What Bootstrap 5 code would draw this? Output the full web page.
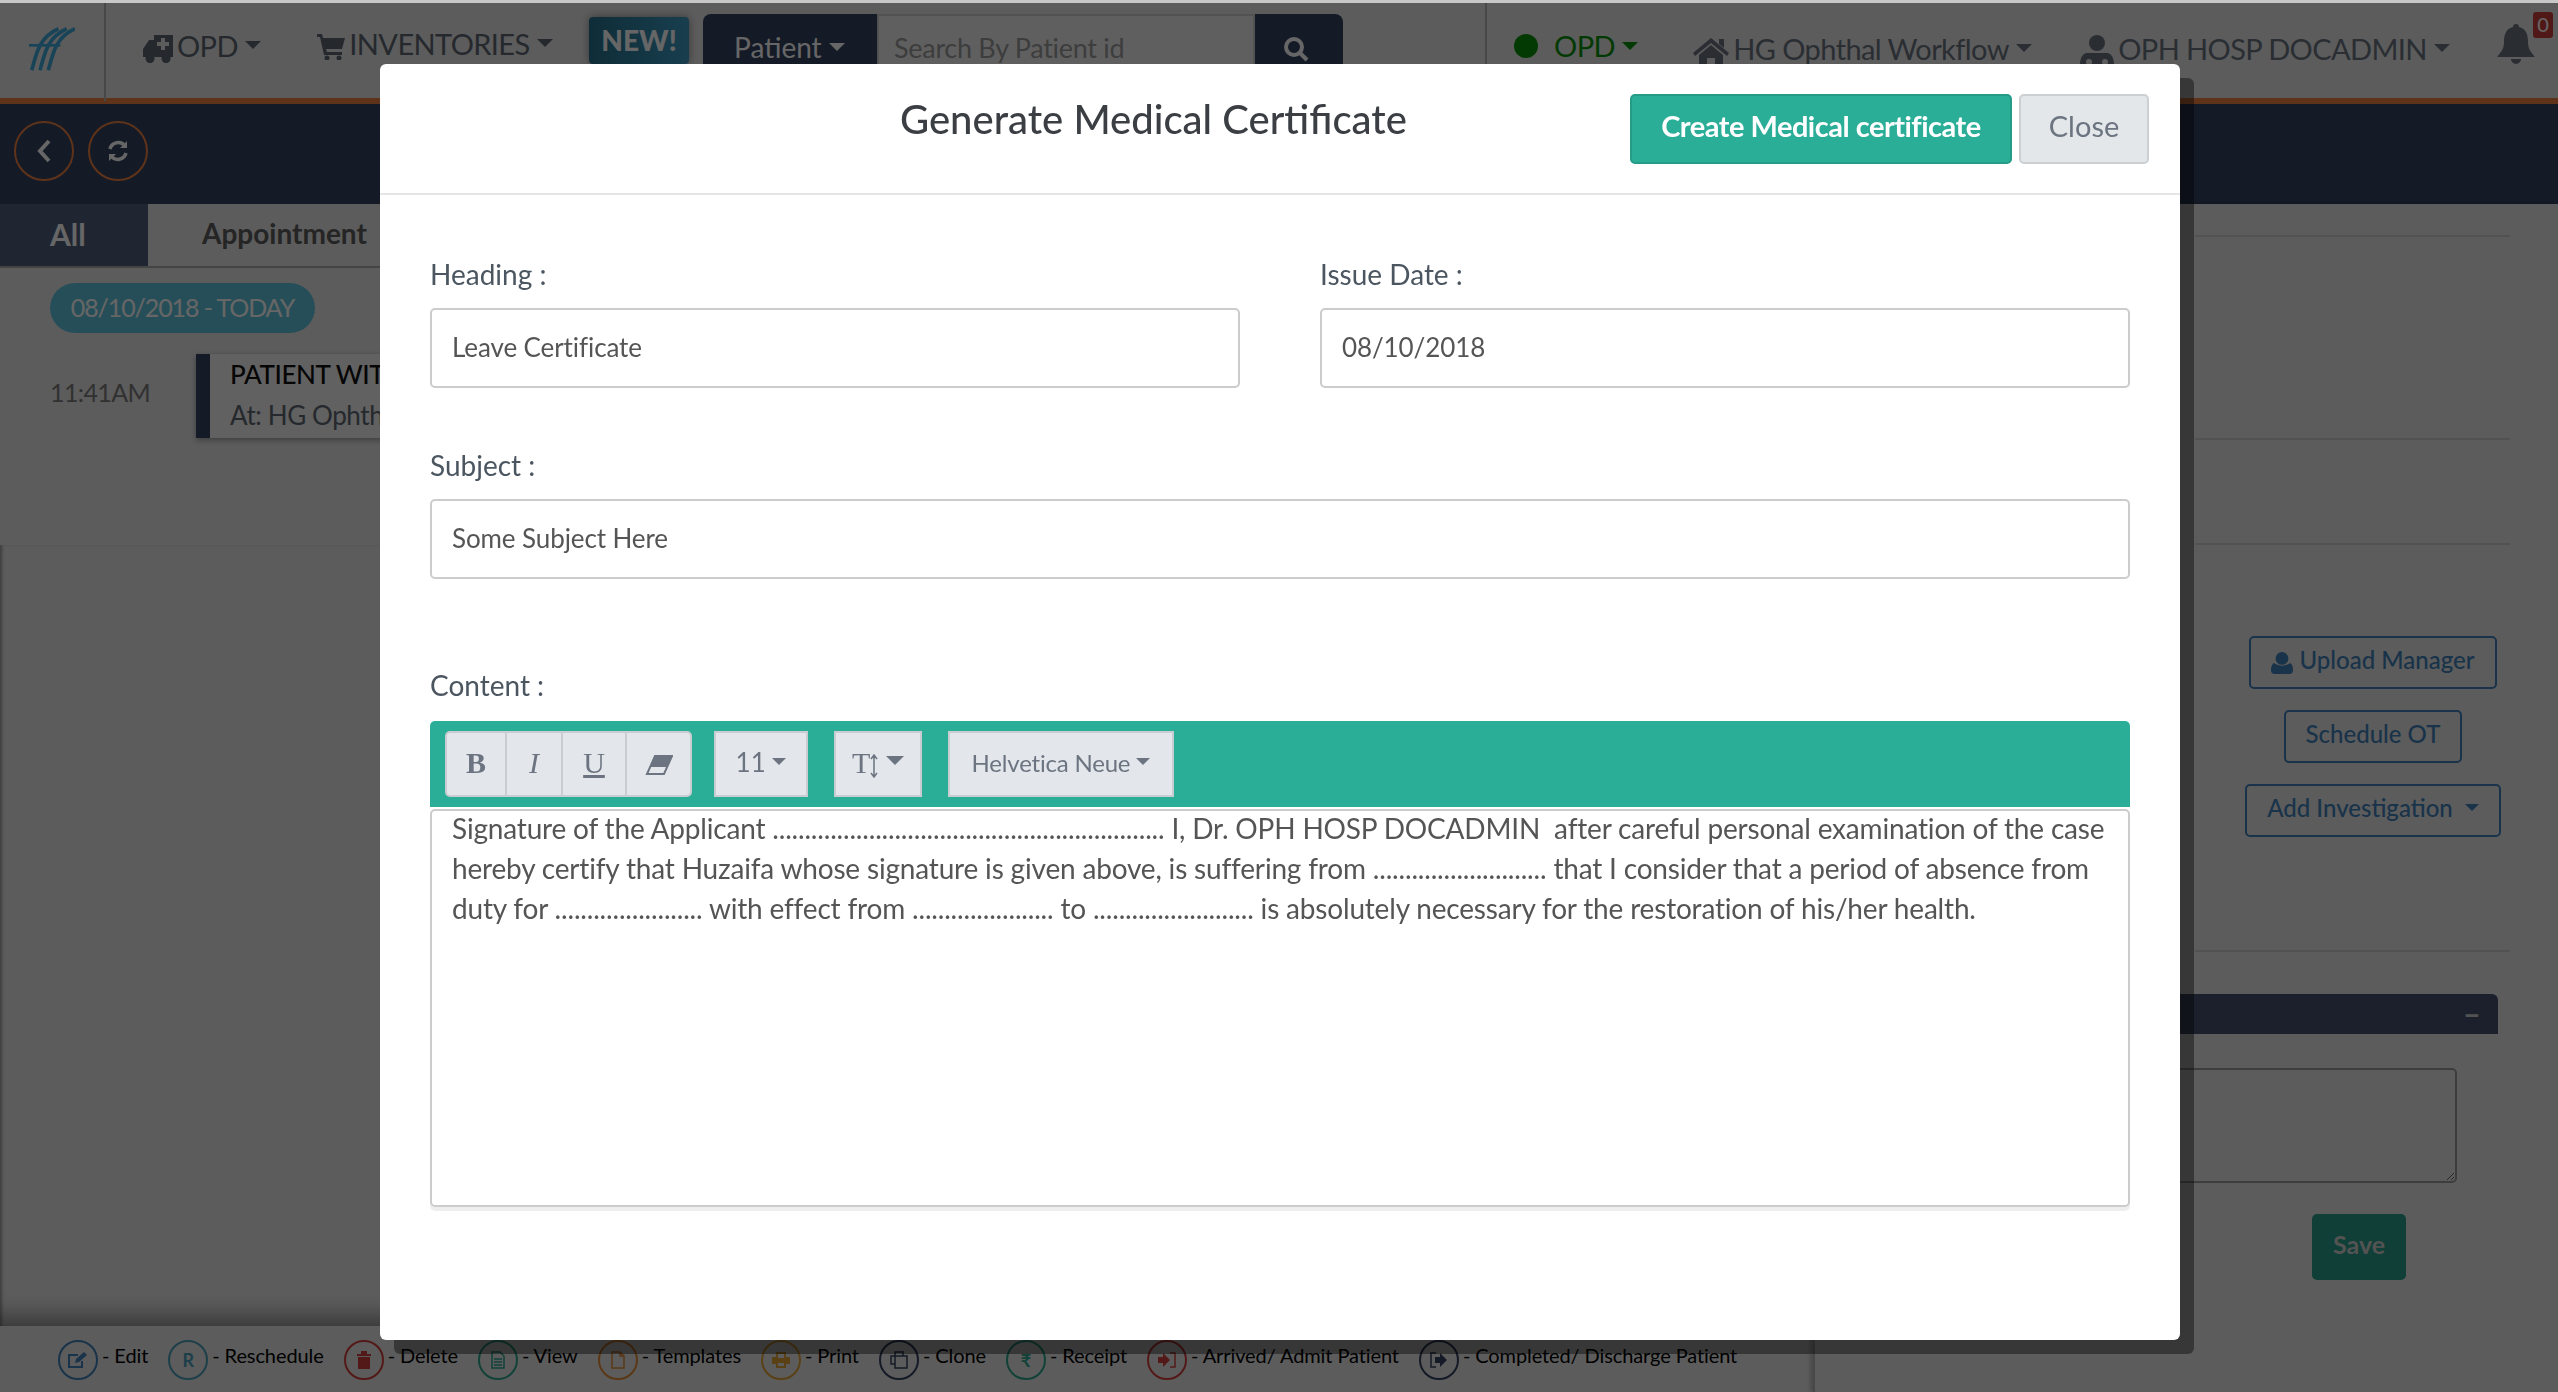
<!DOCTYPE html>
<html lang="en">
<head>
  <meta charset="UTF-8" />
  <meta name="viewport" content="width=device-width, initial-scale=1.0"/>
  <title>Generate Medical Certificate</title>
  <link href="https://cdn.jsdelivr.net/npm/bootstrap@5.3.0/dist/css/bootstrap.min.css" rel="stylesheet"/>

  <style>
    html, body {
      height: 100%;
      overflow: hidden;
    }

    body {
      background: #e6e6e6;
      color: #5c6670;
      font-family: Lato, "Liberation Sans", sans-serif;
      font-size: 28px;
      padding-top: 3px;
    }

    .top-strip {
      position: fixed;
      top: 0;
      left: 0;
      right: 0;
      height: 3px;
      background: #c8c8c8;
      z-index: 1060;
    }

    .modal-backdrop {
      --bs-backdrop-opacity: .6;
    }

    /* top bar */
    .top-bar {
      height: 101px;
      border-bottom: 6px solid #ed8040;
    }

    .logo-box {
      width: 106px;
      height: 101px;
      border-right: 2px solid #b5b5b5;
      padding: 24px 0 0 29px;
    }

    .top-link {
      font-size: 29px;
      letter-spacing: -.6px;
      white-space: nowrap;
    }

    .top-link svg {
      margin-right: 4px;
    }

    .link-opd { margin-left: 37px; margin-top: -10px; }
    .link-inv { margin-left: 56px; margin-top: -14px; }

    .new-tag {
      margin-left: 36px;
      margin-top: -20px;
      width: 100px;
      height: 47px;
      border-radius: 4px;
      background: linear-gradient(90deg, #25708c, #3d9cc4);
      color: #fff;
      font-weight: 900;
      line-height: 46px;
      text-align: center;
      box-shadow: 0 0 8px rgba(0, 0, 0, .4);
    }

    .patient-search {
      margin-left: 14px;
      margin-top: 11px;
      align-self: flex-start;
      height: 62px;
    }

    .patient-pick {
      width: 174px;
      background: #324160;
      color: #fff;
      border-radius: 8px 0 0 0;
      padding: 12px 0 0 31px;
    }

    .search-field {
      width: 378px;
      background: #eeeeee;
      color: #999;
      border: 2px solid #ccc;
      padding: 12px 0 0 15px;
      font-size: 27px;
      letter-spacing: -.3px;
    }

    .search-go {
      width: 88px;
      background: #324160;
      border-radius: 0 8px 0 0;
      padding: 22px 0 0 28px;
    }

    .right-links {
      flex: 1;
      margin-left: 142px;
      height: 95px;
      border-left: 2px solid #b5b5b5;
      padding-left: 27px;
      padding-right: 23px;
      color: #697380;
    }

    .green-dot {
      width: 24px;
      height: 24px;
      background: #089108;
      display: inline-block;
    }

    .text-opd {
      color: #089108;
      margin-top: -9px;
    }

    .home-link {
      margin-left: 55px;
      margin-top: -4px;
    }

    .doc-link {
      margin-left: 48px;
      margin-top: -4px;
    }

    .bell-wrap {
      position: relative;
      margin-left: auto;
      margin-top: -18px;
    }

    .bell-count {
      position: absolute;
      top: -7px;
      left: 36px;
      width: 20px;
      height: 26px;
      border-radius: 3px;
      background: #c9403c;
      color: #fff;
      font-size: 20px;
      line-height: 24px;
      text-align: center;
    }

    /* second bar */
    .sub-bar {
      height: 100px;
      background: #324160;
      padding: 0 0 6px 14px;
      gap: 14px;
    }

    .round-btn {
      width: 60px;
      height: 60px;
      border: 2px solid #ed8040;
      border-radius: 50%;
    }

    /* lower part */
    .page-split {
      height: 1188px;
    }

    .left-side {
      width: 1813px;
    }

    .tab-row {
      height: 64px;
      border-bottom: 2px solid #aaa;
      font-weight: 700;
    }

    .tab-all {
      width: 148px;
      height: 62px;
      background: #51607c;
      color: #fff;
      padding: 8px 0 0 50px;
      font-size: 30px;
    }

    .tab-other {
      padding: 8px 0 0 54px;
      color: #5c5c5c;
    }

    .day-pill {
      width: 265px;
      height: 50px;
      margin: 15px 0 21px 50px;
      background: #60c4dc;
      color: #fff;
      border-radius: 25px;
      font-size: 25px;
      line-height: 48px;
      letter-spacing: -1.1px;
      text-align: center;
    }

    .visit-time {
      width: 196px;
      padding-left: 50px;
      font-size: 25px;
      letter-spacing: -.6px;
      color: #7a7a7a;
      margin-top: -6px;
    }

    .visit-card {
      width: 500px;
      height: 84px;
      background: #f2f2f2;
      border-left: 14px solid #324160;
      box-shadow: 0 2px 6px rgba(0, 0, 0, .35);
      padding: 0 0 0 20px;
      font-size: 26px;
      line-height: 41px;
      letter-spacing: -.4px;
      white-space: nowrap;
    }

    .visit-card b {
      display: block;
      font-weight: 500;
      color: #111;
    }

    .left-fill {
      height: 781px;
      margin-top: 107px;
      box-shadow: inset 3px 0 3px -1px rgba(0, 0, 0, .3), inset 0 -26px 20px -14px rgba(0, 0, 0, .35);
    }

    .legend-row {
      height: 66px;
      padding: 14px 0 0 58px;
      gap: 20px;
      font-size: 20px;
      color: #000;
      letter-spacing: -.1px;
      white-space: nowrap;
    }

    .legend-icon {
      width: 40px;
      height: 40px;
      border: 2px solid currentColor;
      border-radius: 50%;
      font-size: 18px;
      font-weight: 700;
      margin-right: 4px;
    }

    .ic-blue { color: #3f7fb8; }
    .ic-teal { color: #4a9dba; }
    .ic-red { color: #d0403c; }
    .ic-green { color: #2aa58c; }
    .ic-orange { color: #e08a35; }
    .ic-amber { color: #e0a035; }
    .ic-navy { color: #324160; }

    .right-side {
      flex: 1;
      border-left: 2px solid #b5b5b5;
      box-shadow: -3px 0 4px rgba(0, 0, 0, .2);
      padding-right: 48px;
    }

    .side-line {
      border-bottom: 2px solid #ccc;
      margin-left: 380px;
    }

    .rows-a { height: 33px; }
    .rows-b { height: 203px; }
    .rows-c { height: 105px; }
    .rows-d { height: 407px; padding-top: 91px; }

    .side-btns {
      width: 274px;
      gap: 21px;
    }

    .side-btn {
      height: 53px;
      border: 2px solid #3f7fb8;
      border-radius: 5px;
      color: #3f7fb8;
      font-size: 24px;
      font-weight: 500;
      padding: 5px 20px;
      line-height: 34px;
      white-space: nowrap;
    }

    .side-btn.dropdown-toggle::after {
      margin-left: 12px;
    }

    .side-panel-head {
      height: 40px;
      margin: 42px 12px 0 20px;
      background: #46516f;
      border-radius: 6px 6px 0 0;
      color: #ccc;
      font-weight: 900;
      padding-right: 18px;
    }

    .side-area {
      height: 115px;
      width: 620px;
      margin: 34px 53px 31px 0;
      border: 2px solid #999;
      border-radius: 5px;
      resize: both;
      background: transparent;
    }

    .side-save {
      width: 94px;
      height: 66px;
      background: #289d8a;
      color: #d0d0d0;
      border-radius: 5px;
      font-weight: 700;
      font-size: 25px;
      padding-bottom: 4px;
      margin-right: 104px;
    }

    /* modal */
    .cert-dialog {
      max-width: 1800px;
      margin: 64px 0 0 380px;
    }

    .cert-content {
      height: 1276px;
      border: 0;
      border-radius: 6px;
      box-shadow: 14px 14px 0 rgba(0, 0, 0, .4);
      color: #4b5661;
    }

    .cert-header {
      height: 131px;
      padding: 30px 31px 0 520px;
      align-items: flex-start;
      border-bottom: 2px solid #e5e5e5;
    }

    .cert-title {
      font-size: 40px;
      line-height: 50px;
      color: #3b3f44;
    }

    .btn-create, .btn-shut {
      height: 70px;
      font-size: 29px;
      border-radius: 5px;
      padding: 0 0 7px;
    }

    .btn-create {
      width: 382px;
      background: #2bae98;
      border: 2px solid #259c88;
      color: #fff;
      margin-left: auto;
      font-weight: 700;
      letter-spacing: -.5px;
    }

    .btn-shut {
      width: 130px;
      margin-left: 7px;
      background: #e4e7ea;
      border: 2px solid #cdd0d3;
      color: #6b7480;
    }

    .cert-body {
      padding: 62px 50px 0;
    }

    .field-label {
      display: block;
      height: 35px;
      line-height: 35px;
      margin-bottom: 16px;
    }

    .field-box {
      height: 80px;
      font-size: 26px;
      letter-spacing: -.1px;
      color: #555;
      padding: 0 20px 3px;
      border: 2px solid #ccc;
      border-radius: 5px;
      font-family: inherit;
    }

    .field-col-l { flex: 0 0 810px; }
    .field-col-r { flex: 0 0 810px; margin-left: 80px; }
    .subject-block { margin-top: 60px; }
    .content-block { margin-top: 89px; }
    .content-block .field-label { margin-bottom: 18px; }

    .editor-bar {
      height: 86px;
      background: #2bae98;
      border-radius: 5px 5px 0 0;
      padding: 10px 0 0 15px;
    }

    .tool-btn {
      height: 66px;
      background: #e3e6ea;
      border: 2px solid #c9ccd0;
      color: #6b7480;
      font-size: 26px;
      padding: 0 0 3px;
      border-radius: 0;
    }

    .tool-group .tool-btn:first-child {
      border-radius: 5px 0 0 5px;
    }

    .tool-group .tool-btn:last-child {
      border-radius: 0 5px 5px 0;
    }

    .tool-group .tool-btn + .tool-btn {
      margin-left: -2px;
    }

    .tool-serif {
      font-family: "Liberation Serif", serif;
      font-size: 30px;
    }

    .tb-b { width: 62px; }
    .tb-i { width: 58px; }
    .tb-u { width: 66px; }
    .tb-e { width: 67px; }
    .tb-size { width: 94px; margin-left: 22px; }
    .tb-height { width: 88px; margin-left: 26px; }
    .tb-font { width: 226px; margin-left: 26px; font-size: 24px; letter-spacing: -.2px; }

    .editor-text {
      height: 398px;
      margin-top: 2px;
      border: 2px solid #ccc;
      border-radius: 5px;
      padding: 0 20px;
      line-height: 40px;
      letter-spacing: -.18px;
      color: #555;
      box-shadow: 0 4px 0 #eee;
    }

    .editor-lines {
      margin-top: -3px;
    }
  </style>
</head>

<body>
  <div class="top-strip"></div>

  <!-- page behind the modal -->
  <div class="top-bar d-flex align-items-center">
    <div class="logo-box flex-shrink-0">
      <svg width="46" height="48" viewBox="0 0 50 48" fill="none" stroke="#3fa9d8" stroke-width="4">
        <path d="M3 47 C8 30 10 12 32 2"/>
        <path d="M12 47 C17 30 19 12 41 2"/>
        <path d="M21 47 C26 30 28 12 50 2"/>
        <path d="M0 20 H34" stroke-width="3"/>
      </svg>
    </div>
    <div class="top-link dropdown-toggle link-opd">
      <svg width="30" height="28" viewBox="0 0 30 28" fill="currentColor"><path d="M0 14 L6 5 H11 V0 H30 V22 H0Z M7 28 a4.500 4.500 0 1 1 .1 0Z M23 28 a4.500 4.500 0 1 1 .1 0Z"/><path d="M18 3 h4 v4 h4 v4 h-4 v4 h-4 v-4 h-4 v-4 h4Z" fill="#e6e6e6"/></svg>OPD</div>
    <div class="top-link dropdown-toggle link-inv">
      <svg width="28" height="26" viewBox="0 0 28 26" fill="currentColor"><path d="M0 0 H5 L6 4 H28 L25 15 H9 L10 18 H25 V21 H7 L3 3 H0Z"/><circle cx="10" cy="24" r="2.500"/><circle cx="22" cy="24" r="2.500"/></svg>INVENTORIES</div>
    <div class="new-tag">NEW!</div>
    <div class="patient-search d-flex">
      <div class="patient-pick dropdown-toggle">Patient</div>
      <div class="search-field">Search By Patient id</div>
      <div class="search-go">
        <svg class="d-block" width="26" height="26" viewBox="0 0 26 26" fill="none" stroke="#fff" stroke-width="4"><circle cx="11" cy="11" r="8"/><path d="M17 17 L24 24"/></svg>
      </div>
    </div>
    <div class="right-links d-flex align-items-center">
      <div class="top-link dropdown-toggle d-flex align-items-center text-opd">
        <span class="rounded-circle me-3 green-dot"></span><span>OPD</span></div>
      <div class="top-link dropdown-toggle home-link">
        <svg width="36" height="32" viewBox="0 0 36 32" fill="currentColor"><path d="M18 2 L36 17 L34 20 L18 7 L2 20 L0 17 L18 2Z M26 3 h5 v9 l-5 -4Z M6 19 L18 9 L30 19 V32 H22 V22 H14 V32 H6Z"/></svg>HG Ophthal Workflow</div>
      <div class="top-link dropdown-toggle doc-link">
        <svg width="34" height="34" viewBox="0 0 34 34" fill="currentColor"><circle cx="17" cy="8" r="8"/><path d="M6 18 H28 Q34 20 34 30 Q34 34 30 34 H4 Q0 34 0 30 Q0 20 6 18Z"/><circle cx="9" cy="27" r="3" fill="#e6e6e6"/><circle cx="25" cy="27" r="3" fill="#e6e6e6"/></svg>OPH HOSP DOCADMIN</div>
      <div class="bell-wrap">
        <svg width="38" height="40" viewBox="0 0 38 40" fill="#697380"><path d="M19 0 a3 3 0 0 1 3 3 C30 5 31 12 31 18 C31 26 35 29 38 33 H0 C3 29 7 26 7 18 C7 12 8 5 16 3 a3 3 0 0 1 3 -3Z M14 35 H24 a5 5 0 0 1 -10 0Z"/></svg>
        <span class="bell-count">0</span>
      </div>
    </div>
  </div>

  <div class="sub-bar d-flex align-items-center">
    <div class="round-btn d-flex align-items-center justify-content-center">
      <svg width="14" height="24" viewBox="0 0 14 24" fill="none" stroke="#fff" stroke-width="4"><path d="M12 2 L3 12 L12 22"/></svg>
    </div>
    <div class="round-btn d-flex align-items-center justify-content-center">
      <svg width="22" height="22" viewBox="0 0 22 22" fill="none" stroke="#fff" stroke-width="3.500"><path d="M3 9 A8.500 8.500 0 0 1 18 6 M19 13 A8.500 8.500 0 0 1 4 16"/><path d="M20 1 V8 H13 Z M2 21 V14 H9 Z" fill="#fff" stroke="none"/></svg>
    </div>
  </div>

  <div class="page-split d-flex">
    <div class="left-side flex-shrink-0 d-flex flex-column">
      <div class="tab-row d-flex">
        <div class="tab-all">All</div>
        <div class="tab-other">Appointment</div>
      </div>
      <div class="day-pill">08/10/2018 - TODAY</div>
      <div class="d-flex align-items-center">
        <div class="visit-time">11:41AM</div>
        <div class="visit-card">
          <b>PATIENT WITH</b>
          At: HG Ophthal
        </div>
      </div>
      <div class="left-fill"></div>
      <div class="legend-row d-flex">
        <div class="d-flex">
          <span class="legend-icon d-flex align-items-center justify-content-center ic-blue">
            <svg width="20" height="18" viewBox="0 0 20 18" fill="none" stroke="currentColor" stroke-width="2"><path d="M14 10 V16 H1 V4 H10"/><path d="M7 12 L8 8 L16 1 L19 4 L11 11Z" fill="currentColor" stroke="none"/></svg>
          </span>
          <span>- Edit</span>
        </div>
        <div class="d-flex">
          <span class="legend-icon d-flex align-items-center justify-content-center ic-teal">R</span>
          <span>- Reschedule</span>
        </div>
        <div class="d-flex">
          <span class="legend-icon d-flex align-items-center justify-content-center ic-red">
            <svg width="14" height="18" viewBox="0 0 14 18" fill="currentColor"><path d="M0 3 H4 V0 H10 V3 H14 V5 H0Z M1 6 H13 V18 H1Z"/></svg>
          </span>
          <span>- Delete</span>
        </div>
        <div class="d-flex">
          <span class="legend-icon d-flex align-items-center justify-content-center ic-green">
            <svg width="14" height="18" viewBox="0 0 14 18" fill="none" stroke="currentColor" stroke-width="1.500"><path d="M1 1 H9 L13 5 V17 H1Z M3 8 H11 M3 11 H11 M3 14 H11"/></svg>
          </span>
          <span>- View</span>
        </div>
        <div class="d-flex">
          <span class="legend-icon d-flex align-items-center justify-content-center ic-orange">
            <svg width="14" height="18" viewBox="0 0 14 18" fill="none" stroke="currentColor" stroke-width="1.500"><path d="M1 1 H9 L13 5 V17 H1Z M9 1 V5 H13"/></svg>
          </span>
          <span>- Templates</span>
        </div>
        <div class="d-flex">
          <span class="legend-icon d-flex align-items-center justify-content-center ic-amber">
            <svg width="18" height="16" viewBox="0 0 18 16" fill="currentColor"><path d="M4 0 H14 V5 H18 V12 H14 V16 H4 V12 H0 V5 H4Z M6 2 V6 H12 V2Z M6 11 V14 H12 V11Z"/></svg>
          </span>
          <span>- Print</span>
        </div>
        <div class="d-flex">
          <span class="legend-icon d-flex align-items-center justify-content-center ic-navy">
            <svg width="18" height="18" viewBox="0 0 18 18" fill="none" stroke="currentColor" stroke-width="1.500"><path d="M5 5 V1 H13 V5 M5 5 H1 V13 H5 M5 5 H17 V17 H5Z"/></svg>
          </span>
          <span>- Clone</span>
        </div>
        <div class="d-flex">
          <span class="legend-icon d-flex align-items-center justify-content-center ic-green">₹</span>
          <span>- Receipt</span>
        </div>
        <div class="d-flex">
          <span class="legend-icon d-flex align-items-center justify-content-center ic-red">
            <svg width="18" height="16" viewBox="0 0 18 16" fill="currentColor"><path d="M0 5 H5 V1 L12 8 L5 15 V11 H0Z"/><path d="M12 1 H17 V15 H12" fill="none" stroke="currentColor" stroke-width="1.500"/></svg>
          </span>
          <span>- Arrived/ Admit Patient</span>
        </div>
        <div class="d-flex">
          <span class="legend-icon d-flex align-items-center justify-content-center ic-navy">
            <svg width="18" height="16" viewBox="0 0 18 16" fill="currentColor"><path d="M6 1 H1 V15 H6" fill="none" stroke="currentColor" stroke-width="1.500"/><path d="M5 5 H10 V1 L17 8 L10 15 V11 H5Z"/></svg>
          </span>
          <span>- Completed/ Discharge Patient</span>
        </div>
      </div>
    </div>

    <div class="right-side">
      <div class="side-line rows-a"></div>
      <div class="side-line rows-b"></div>
      <div class="side-line rows-c"></div>
      <div class="side-line rows-d">
        <div class="side-btns d-flex flex-column align-items-center ms-auto">
          <div class="side-btn">
            <svg width="22" height="22" viewBox="0 0 24 24" fill="currentColor"><circle cx="12" cy="7" r="7"/><path d="M3 12 Q12 18 21 12 Q24 14 24 20 Q24 24 20 24 H4 Q0 24 0 20 Q0 14 3 12Z"/></svg>
            Upload Manager
          </div>
          <div class="side-btn">Schedule OT</div>
          <div class="side-btn dropdown-toggle">Add Investigation</div>
        </div>
      </div>
      <div class="side-panel-head d-flex align-items-center justify-content-end">−</div>
      <div class="d-flex flex-column align-items-end">
        <textarea class="side-area"></textarea>
        <div class="side-save d-flex align-items-center justify-content-center">Save</div>
      </div>
    </div>
  </div>

  <div class="modal-backdrop fade show"></div>

  <div class="modal d-block">
    <div class="modal-dialog cert-dialog">
      <div class="modal-content cert-content">
        <div class="modal-header cert-header">
          <h4 class="modal-title cert-title">Generate Medical Certificate</h4>
          <button type="button" class="btn btn-create">Create Medical certificate</button>
          <button type="button" class="btn btn-shut">Close</button>
        </div>
        <div class="modal-body cert-body">
          <div class="row gx-0">
            <div class="col field-col-l">
              <label class="field-label">Heading :</label>
              <input type="text" class="form-control field-box" value="Leave Certificate"/>
            </div>
            <div class="col field-col-r">
              <label class="field-label">Issue Date :</label>
              <input type="text" class="form-control field-box" value="08/10/2018"/>
            </div>
          </div>
          <div class="subject-block">
            <label class="field-label">Subject :</label>
            <input type="text" class="form-control field-box" value="Some Subject Here"/>
          </div>
          <div class="content-block">
            <label class="field-label">Content :</label>
            <div class="editor-bar d-flex">
              <div class="tool-group d-flex">
                <button type="button" class="btn tool-btn tool-serif fw-bold tb-b">B</button>
                <button type="button" class="btn tool-btn tool-serif fst-italic tb-i">I</button>
                <button type="button" class="btn tool-btn tool-serif text-decoration-underline tb-u">U</button>
                <button type="button" class="btn tool-btn tb-e">
                  <svg width="28" height="20" viewBox="0 0 28 20" fill="none" stroke="currentColor" stroke-width="2"><path d="M10 1 H27 L19 19 H2Z"/><path d="M10 1 H27 L22 12 H5Z" fill="currentColor" stroke="none"/></svg>
                </button>
              </div>
              <button type="button" class="btn tool-btn dropdown-toggle tb-size">11</button>
              <button type="button" class="btn tool-btn tool-serif dropdown-toggle tb-height">T<svg width="8" height="24" viewBox="0 0 8 24" fill="none" stroke="currentColor" stroke-width="1.500"><path d="M4 1 V23 M1 5 L4 1 L7 5 M1 19 L4 23 L7 19"/></svg></button>
              <button type="button" class="btn tool-btn dropdown-toggle tb-font">Helvetica Neue</button>
            </div>
            <div class="editor-text"><div class="editor-lines">Signature of the Applicant ............................................................. I, Dr. OPH HOSP DOCADMIN&nbsp; after careful personal examination of the case hereby certify that Huzaifa whose signature is given above, is suffering from ........................... that I consider that a period of absence from duty for ....................... with effect from ...................... to ......................... is absolutely necessary for the restoration of his/her health.</div></div>
          </div>
        </div>
      </div>
    </div>
  </div>
</body>
</html>
